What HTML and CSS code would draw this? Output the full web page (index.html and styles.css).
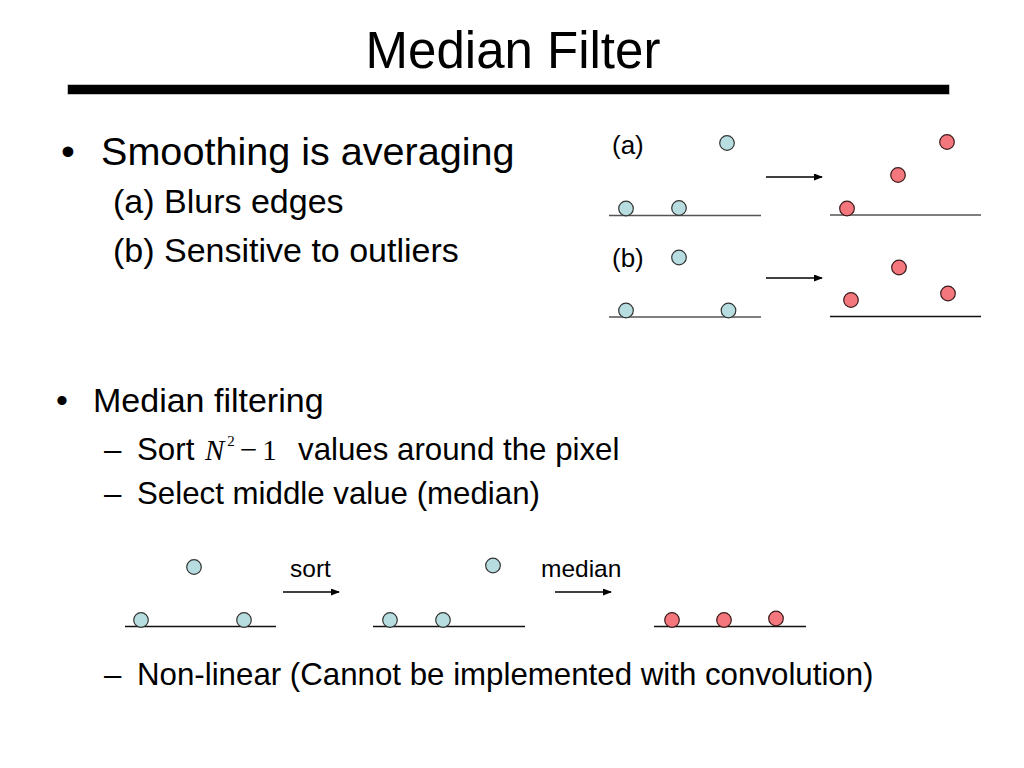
FILE: index.html
```html
<!DOCTYPE html>
<html>
<head>
<meta charset="utf-8">
<title>Median Filter</title>
<link rel="stylesheet" href="styles.css">
</head>
<body>
<div class="slide">
  <h1 class="title">Median Filter</h1>
  <div class="rule"></div>

  <section class="top">
    <div class="top-list">
      <div class="l1"><span class="bullet">•</span><span>Smoothing is averaging</span></div>
      <div class="l2">(a) Blurs edges</div>
      <div class="l2">(b) Sensitive to outliers</div>
    </div>
    <svg class="diag-top" width="390" height="200" viewBox="600 126 390 200">
      <defs>
        <marker id="ah" markerWidth="9" markerHeight="7" refX="8" refY="3.5" orient="auto" markerUnits="userSpaceOnUse">
          <path d="M0,0 L9,3.5 L0,7 Z" fill="#000"/>
        </marker>
      </defs>
      <text x="612" y="154" class="lbl">(a)</text>
      <text x="612" y="267" class="lbl">(b)</text>

      <line x1="609" y1="215.5" x2="761" y2="215.5" class="base"/>
      <circle cx="727" cy="143" r="7.3" class="blue"/>
      <circle cx="626" cy="208.5" r="7.3" class="blue"/>
      <circle cx="679" cy="208" r="7.3" class="blue"/>
      <line x1="766" y1="177" x2="822" y2="177" class="arrow" marker-end="url(#ah)"/>
      <line x1="830" y1="215" x2="981" y2="215" class="base"/>
      <circle cx="947" cy="142" r="7.3" class="red"/>
      <circle cx="898" cy="175" r="7.3" class="red"/>
      <circle cx="847" cy="208.5" r="7.3" class="red"/>

      <line x1="609" y1="317" x2="761" y2="317" class="base"/>
      <circle cx="679" cy="257.5" r="7.3" class="blue"/>
      <circle cx="626" cy="310.5" r="7.3" class="blue"/>
      <circle cx="728.5" cy="310.5" r="7.3" class="blue"/>
      <line x1="766" y1="278" x2="822" y2="278" class="arrow" marker-end="url(#ah)"/>
      <line x1="830" y1="316.5" x2="981" y2="316.5" class="base dark"/>
      <circle cx="899" cy="267.5" r="7.3" class="red"/>
      <circle cx="851" cy="300" r="7.3" class="red"/>
      <circle cx="948" cy="293.5" r="7.3" class="red"/>
    </svg>
  </section>

  <section class="median">
    <div class="m1"><span class="bullet2">•</span><span>Median filtering</span></div>
    <div class="m2-list">
      <div class="m2"><span class="dash">–</span><span>Sort <span class="math"><i>N</i><sup>2</sup><span class="minus">−</span>1</span>values around the pixel</span></div>
      <div class="m2"><span class="dash">–</span><span>Select middle value (median)</span></div>
    </div>
    <svg class="diag-bottom" width="710" height="90" viewBox="110 550 710 90">
      <defs>
        <marker id="ah2" markerWidth="9" markerHeight="7" refX="8" refY="3.5" orient="auto" markerUnits="userSpaceOnUse">
          <path d="M0,0 L9,3.5 L0,7 Z" fill="#000"/>
        </marker>
      </defs>
      <line x1="125" y1="626.5" x2="276" y2="626.5" class="base dark"/>
      <circle cx="194" cy="567" r="7.3" class="blue"/>
      <circle cx="141" cy="620" r="7.3" class="blue"/>
      <circle cx="244" cy="620" r="7.3" class="blue"/>
      <text x="290" y="577" class="cap">sort</text>
      <line x1="283" y1="592" x2="339" y2="592" class="arrow" marker-end="url(#ah2)"/>

      <line x1="373" y1="626.5" x2="525" y2="626.5" class="base dark"/>
      <circle cx="493" cy="565.5" r="7.3" class="blue"/>
      <circle cx="390" cy="620" r="7.3" class="blue"/>
      <circle cx="443" cy="620" r="7.3" class="blue"/>
      <text x="541" y="577" class="cap">median</text>
      <line x1="555" y1="592" x2="611" y2="592" class="arrow" marker-end="url(#ah2)"/>

      <line x1="654" y1="626.5" x2="806" y2="626.5" class="base dark"/>
      <circle cx="672" cy="620" r="7.3" class="red"/>
      <circle cx="724" cy="620" r="7.3" class="red"/>
      <circle cx="776" cy="618.5" r="7.3" class="red"/>
    </svg>
    <div class="m2 last"><span class="dash">–</span><span>Non-linear (Cannot be implemented with convolution)</span></div>
  </section>
</div>
</body>
</html>
```

FILE: styles.css
```css
html, body {
  margin: 0;
  padding: 0;
  background: #fff;
}

.slide {
  width: 1024px;
  height: 768px;
  overflow: hidden;
  font-family: "Liberation Sans", Arial, sans-serif;
  color: #000;
  box-sizing: border-box;
  padding-top: 20px;
}

.title {
  margin: 0;
  font-weight: normal;
  font-size: 51px;
  line-height: 61px;
  text-align: center;
  padding-left: 2px;
}

.rule {
  margin: 4px 0 0 68px;
  width: 881px;
  height: 9px;
  background: #000;
  box-shadow: 0 0 0 0.6px #999;
}

.top {
  display: grid;
  grid-template-columns: 600px 390px;
  margin-top: 32px;
}

.l1 {
  display: flex;
  font-size: 39.6px;
  line-height: 51px;
  padding-left: 61px;
}

.bullet {
  width: 40px;
  flex: none;
}

.l2 {
  font-size: 34px;
  line-height: 49px;
  padding-left: 113px;
}

.diag-top,
.diag-bottom {
  display: block;
}

.lbl {
  font-family: "Liberation Sans", Arial, sans-serif;
  font-size: 26px;
}

.cap {
  font-family: "Liberation Sans", Arial, sans-serif;
  font-size: 24.5px;
}

.base {
  stroke: #555;
  stroke-width: 1.4;
}

.base.dark {
  stroke: #111;
  stroke-width: 1.3;
}

.arrow {
  stroke: #000;
  stroke-width: 1.5;
}

.blue {
  fill: #b7dde1;
  stroke: #333;
  stroke-width: 1.2;
}

.red {
  fill: #f4777e;
  stroke: #3a1a1a;
  stroke-width: 1.2;
}

.median {
  margin-top: 49px;
}

.m1 {
  display: flex;
  font-size: 34px;
  line-height: 50px;
  padding-left: 56px;
}

.bullet2 {
  width: 37px;
  flex: none;
}

.m2-list {
  margin-top: 3px;
}

.m2 {
  display: flex;
  font-size: 31.25px;
  line-height: 44px;
  padding-left: 104px;
}

.dash {
  width: 33px;
  flex: none;
}

.math {
  display: inline-block;
  width: 95px;
  font-family: "Liberation Serif", "Times New Roman", serif;
  font-size: 29px;
  padding-left: 2px;
  box-sizing: border-box;
}

.math sup {
  font-size: 15px;
  vertical-align: 14px;
  line-height: 0;
  margin-left: 3px;
  margin-right: 5px;
}

.minus {
  font-size: 31px;
  margin-right: 5px;
}

.diag-bottom {
  margin: 34px 0 0 110px;
}

.last {
  margin-top: 13px;
}
```
